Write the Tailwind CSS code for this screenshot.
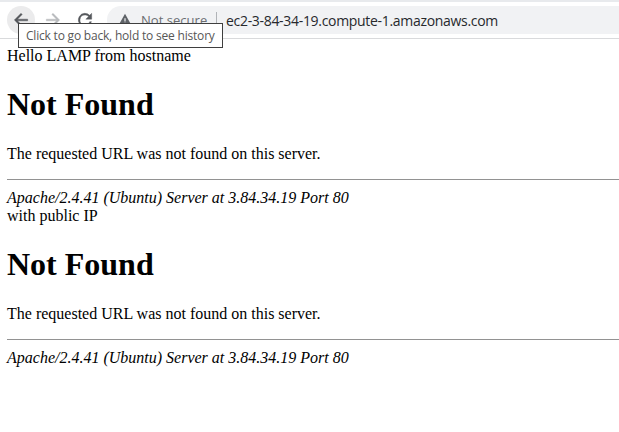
<!DOCTYPE html>
<html lang="en">
<head>
<meta charset="utf-8">
<title>404 Not Found</title>
<script src="https://cdn.jsdelivr.net/npm/@tailwindcss/browser@4"></script>
</head>
<body class="relative h-[432px] w-[619px] overflow-hidden bg-white text-black">
<header class="flex h-[39px] items-center border-t-2 border-b border-t-[#e8eaed] border-b-[#d9dadc] bg-white pl-[7px] font-['Open_Sans',sans-serif]">
  <button class="flex size-7 shrink-0 items-center justify-center rounded-full bg-[#ebebec] text-[#55585c]" aria-label="Back">
    <svg class="size-5" viewBox="0 0 24 24" fill="currentColor" stroke="currentColor" stroke-width=".5"><path d="M20 11H7.83l5.59-5.59L12 4l-8 8 8 8 1.41-1.41L7.83 13H20z"/></svg>
  </button>
  <button class="ml-1 flex size-7 shrink-0 items-center justify-center text-[#b8babd]" aria-label="Forward">
    <svg class="size-5" viewBox="0 0 24 24" fill="currentColor" stroke="currentColor" stroke-width=".5"><path d="m12 4-1.41 1.41L16.17 11H4v2h12.17l-5.58 5.59L12 20l8-8z"/></svg>
  </button>
  <button class="ml-1 flex size-7 shrink-0 items-center justify-center text-[#55585c]" aria-label="Reload">
    <svg class="size-5" viewBox="0 0 24 24" fill="currentColor" stroke="currentColor" stroke-width=".5"><path d="M17.65 6.35A8 8 0 1 0 19.73 14h-2.08A6 6 0 1 1 12 6c1.66 0 3.14.69 4.22 1.78L13 11h7V4z"/></svg>
  </button>
  <div class="ml-2 flex h-7 flex-1 items-center rounded-l-full bg-[#f1f2f4] pl-[11px] whitespace-nowrap">
    <svg class="h-[14px] w-[14px] text-[#5f6368]" viewBox="0 0 14 14" fill="currentColor"><path fill-rule="evenodd" d="M7 .8 13.6 12.5H.4ZM6.4 5.2V8.5H7.6V5.2ZM6.4 9.7V11H7.6V9.7Z"/></svg>
    <span class="ml-[9px] w-[68px] pt-px text-[13px] tracking-[0.03px] text-[#6b6e72]">Not secure</span>
    <span class="ml-[7px] h-4 w-px bg-[#b0b3b7]"></span>
    <span class="ml-[9px] text-[14px] tracking-[-0.31px] text-[#27292d]">ec2-3-84-34-19.compute-1.amazonaws.com</span>
  </div>
</header>
<main class="pt-2 pl-[7px] font-['Liberation_Serif',serif] text-base leading-[18px]">
  <p>Hello LAMP from hostname</p>
  <h1 class="mt-[21px] mb-[23px] text-[32px] leading-9 font-bold">Not Found</h1>
  <p>The requested URL was not found on this server.</p>
  <hr class="mt-4 mb-[9px] border-t border-[#929292]">
  <address>Apache/2.4.41 (Ubuntu) Server at 3.84.34.19 Port 80</address>
  <p>with public IP</p>
  <h1 class="mt-[21px] mb-[23px] text-[32px] leading-9 font-bold">Not Found</h1>
  <p>The requested URL was not found on this server.</p>
  <hr class="mt-4 mb-[9px] border-t border-[#929292]">
  <address>Apache/2.4.41 (Ubuntu) Server at 3.84.34.19 Port 80</address>
</main>
<div role="tooltip" class="absolute top-[23px] left-[18px] flex h-[25px] w-[205px] items-center border border-[#3f3f3f] bg-white pl-[7px] font-['Open_Sans',sans-serif] text-[12px] tracking-[-0.2px] whitespace-nowrap text-[#575757]">Click to go back, hold to see history</div>
</body>
</html>
